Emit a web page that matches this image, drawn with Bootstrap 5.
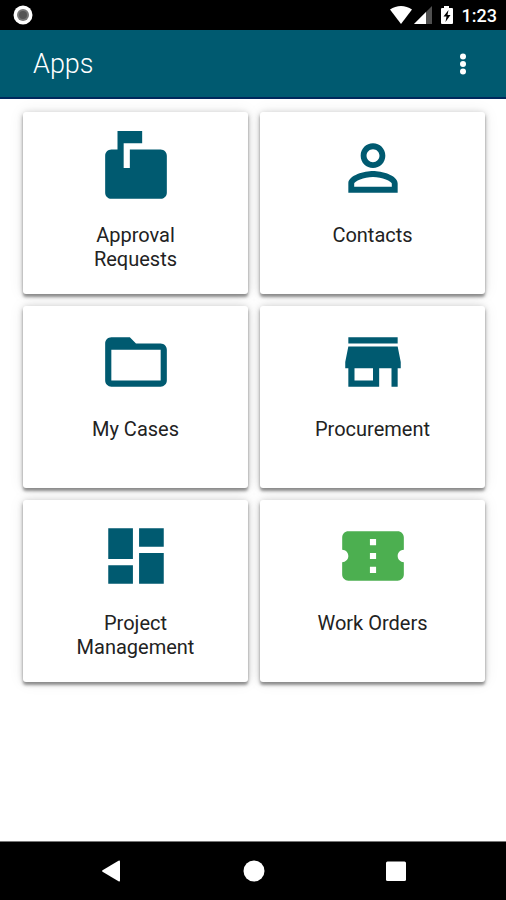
<!DOCTYPE html>
<html lang="en">
<head>
<meta charset="utf-8">
<meta name="viewport" content="width=device-width, initial-scale=1">
<title>Apps</title>
<link rel="stylesheet" href="https://cdn.jsdelivr.net/npm/bootstrap@5.3.0/dist/css/bootstrap.min.css">
<style>
  :root { --brand: #005a70; }
  body { font-family: Roboto, "Liberation Sans", sans-serif; background: #fff; }
  svg { display: block; fill: currentColor; flex: none; }
  .status-bar { height: 30px; padding: 0 9px 0 13px; }
  .status-time { font-size: 18px; line-height: 24px; font-weight: 500; margin-left: 9px; padding-top: 2px; }
  .app-header { background: var(--brand); border-bottom: 2px solid #00285c; height: 69px; padding: 1px 31px 0 33px; }
  .app-title { font-size: 27px; line-height: 36px; font-weight: 300; }
  .icon-button { background: none; border: 0; color: #fff; padding: 0; }
  .app-grid { display: grid; grid-template-columns: 1fr 1fr; gap: 12px; padding: 13px 21px 13px 23px; }
  .app-tile { border: 0; border-radius: 3px; color: #222; padding: 19px 12px 23px;
    box-shadow: 0 3px 3px rgba(0,0,0,.36), 0 1px 6px rgba(0,0,0,.2), 0 0 16px rgba(0,0,0,.08); }
  .app-icon { width: 74px; height: 74px; color: var(--brand); }
  .app-icon-active { color: #4caf50; }
  .app-label { font-size: 20px; line-height: 24px; min-height: 48px; margin-top: 18px; max-width: 130px; }
  .system-nav { border-top: 1px solid #777; height: 59px; padding: 0 99px 0 100px; }
</style>
<script src="https://cdn.jsdelivr.net/npm/bootstrap@5.3.0/dist/js/bootstrap.bundle.min.js"></script>
</head>
<body class="d-flex flex-column min-vh-100">
  <div class="status-bar bg-black text-white d-flex align-items-center">
    <svg width="20" height="20" viewBox="0 0 20 20" aria-hidden="true"><circle cx="10" cy="10" r="9.500" fill="#fff"/><circle cx="10" cy="10" r="6" fill="#777"/><circle cx="10" cy="10" r="4" fill="#555"/></svg>
    <div class="d-flex align-items-center ms-auto">
      <svg width="63" height="20" viewBox="0 0 63 20" aria-hidden="true">
        <path d="M0 4.500C6.500-.3 15.500-.3 22 4.500L11 19Z"/>
        <path d="M24 19 42 1V19Z" fill="#505050"/><path d="M24 19 36 7V19Z"/>
        <path fill-rule="evenodd" d="M51 3h3V1h5v2h3q1 0 1 1v14q0 1-1 1H52q-1 0-1-1V4q0-1 1-1ZM58.500 5 53.500 11.500h3l-1 5.500 5-7h-3Z"/>
      </svg>
      <span class="status-time">1:23</span>
    </div>
  </div>

  <header class="app-header d-flex align-items-center justify-content-between text-white">
    <h1 class="app-title m-0">Apps</h1>
    <button class="icon-button" type="button" aria-label="More options">
      <svg width="24" height="24" viewBox="0 0 24 24"><circle cx="12" cy="4.500" r="3"/><circle cx="12" cy="12" r="3"/><circle cx="12" cy="19.500" r="3"/></svg>
    </button>
  </header>

  <main class="app-grid">
    <a href="#approvals" class="app-tile card align-items-center text-center text-decoration-none">
      <svg class="app-icon" viewBox="0 0 24 24" aria-hidden="true"><path d="M20 6H10v6H8V4h6V0H6v6H4c-1.100 0-2 .9-2 2v12c0 1.100.9 2 2 2h16c1.100 0 2-.9 2-2V8c0-1.100-.9-2-2-2z"/></svg>
      <span class="app-label">Approval Requests</span>
    </a>
    <a href="#contacts" class="app-tile card align-items-center text-center text-decoration-none">
      <svg class="app-icon" viewBox="0 0 24 24" aria-hidden="true"><path d="M12 5.900c1.160 0 2.100.94 2.100 2.100s-.94 2.100-2.100 2.100S9.900 9.160 9.900 8s.94-2.100 2.100-2.100m0 9c2.970 0 6.100 1.460 6.100 2.100v1.100H5.900V17c0-.64 3.130-2.100 6.100-2.100M12 4C9.790 4 8 5.790 8 8s1.790 4 4 4 4-1.790 4-4-1.790-4-4-4zm0 9c-2.670 0-8 1.340-8 4v3h16v-3c0-2.660-5.330-4-8-4z"/></svg>
      <span class="app-label">Contacts</span>
    </a>
    <a href="#cases" class="app-tile card align-items-center text-center text-decoration-none">
      <svg class="app-icon" viewBox="0 0 24 24" aria-hidden="true"><path d="M20 6h-8l-2-2H4c-1.100 0-2 .9-2 2v12c0 1.100.9 2 2 2h16c1.100 0 2-.9 2-2V8c0-1.100-.9-2-2-2zm0 12H4V8h16v10z"/></svg>
      <span class="app-label">My Cases</span>
    </a>
    <a href="#procurement" class="app-tile card align-items-center text-center text-decoration-none">
      <svg class="app-icon" viewBox="0 0 24 24" aria-hidden="true"><path d="M20 4H4v2h16V4zm1 10v-2l-1-5H4l-1 5v2h1v6h10v-6h4v6h2v-6h1zm-9 4H6v-4h6v4z"/></svg>
      <span class="app-label">Procurement</span>
    </a>
    <a href="#projects" class="app-tile card align-items-center text-center text-decoration-none">
      <svg class="app-icon" viewBox="0 0 24 24" aria-hidden="true"><path d="M3 13h8V3H3v10zm0 8h8v-6H3v6zm10 0h8V11h-8v10zm0-18v6h8V3h-8z"/></svg>
      <span class="app-label">Project Management</span>
    </a>
    <a href="#work-orders" class="app-tile card align-items-center text-center text-decoration-none">
      <svg class="app-icon app-icon-active" viewBox="0 0 24 24" aria-hidden="true"><path d="M22 10V6c0-1.110-.9-2-2-2H4c-1.100 0-1.990.89-1.990 2v4c1.100 0 1.990.9 1.990 2s-.89 2-2 2v4c0 1.100.9 2 2 2h16c1.100 0 2-.9 2-2v-4c-1.100 0-2-.9-2-2s.9-2 2-2zm-9 7.500h-2v-2h2v2zm0-4.500h-2v-2h2v2zm0-4.500h-2v-2h2v2z"/></svg>
      <span class="app-label">Work Orders</span>
    </a>
  </main>

  <nav class="system-nav bg-black d-flex align-items-center justify-content-between mt-auto" aria-label="System">
    <button class="icon-button" type="button" aria-label="Back"><svg width="22" height="22" viewBox="0 0 22 22"><path d="M2.500 10.200 18.500.800Q20 0 20 1.500V20.500Q20 22 18.500 21.200L2.500 11.800Q1.500 11 2.500 10.200Z"/></svg></button>
    <button class="icon-button" type="button" aria-label="Home"><svg width="22" height="22" viewBox="0 0 22 22"><circle cx="11" cy="11" r="10.500"/></svg></button>
    <button class="icon-button" type="button" aria-label="Recent apps"><svg width="22" height="22" viewBox="0 0 22 22"><rect x="1" y="1.500" width="20" height="19.500" rx="1.500"/></svg></button>
  </nav>
</body>
</html>
